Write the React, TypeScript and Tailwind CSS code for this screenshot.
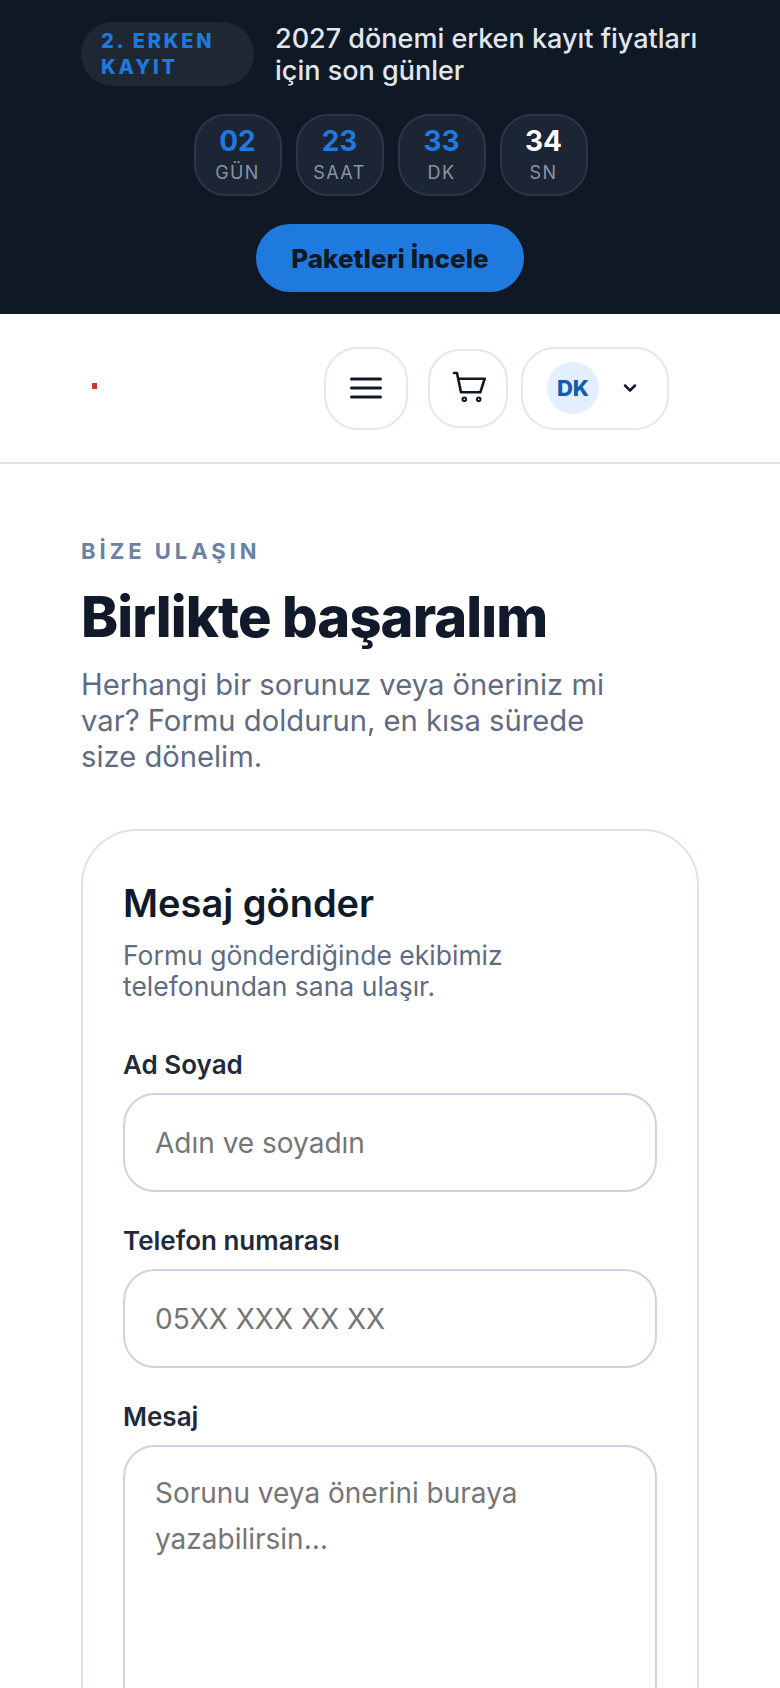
import { ChevronDown } from 'lucide-react';

const counters = [
  { value: '02', label: 'GÜN', color: 'text-[#1f7ae0]' },
  { value: '23', label: 'SAAT', color: 'text-[#1f7ae0]' },
  { value: '33', label: 'DK', color: 'text-[#1f7ae0]' },
  { value: '34', label: 'SN', color: 'text-white' },
];

function CartIcon() {
  return (
    <svg className="ml-[1px]" width="34" height="34" viewBox="-1 -1 34 34" fill="none" stroke="#111827" strokeWidth="2.6" strokeLinecap="round" strokeLinejoin="round">
      <path d="M1 1h3l4 19.300h19.300l4.400-13.600H5.500" />
      <circle cx="11.300" cy="27.300" r="1.800" strokeWidth="2" />
      <circle cx="25.700" cy="27.300" r="1.800" strokeWidth="2" />
    </svg>
  );
}

function Field({ label, placeholder }: { label: string; placeholder: string }) {
  return (
    <div className="flex flex-col gap-[13px]">
      <label className="text-[26px] leading-[30px] font-semibold text-[#1f2a3d]">{label}</label>
      <input
        placeholder={placeholder}
        className="h-[99px] w-full rounded-[32px] border-2 border-[#cbd5e1] bg-white px-[30px] text-[28px] text-[#111827] outline-none placeholder:text-[#757575]"
      />
    </div>
  );
}

export default function App() {
  return (
    <div className="h-[1688px] overflow-hidden bg-white font-['Inter',sans-serif]">
      <div className="flex h-[314px] flex-col items-center bg-[#0f1926] pt-[22px]">
        <div className="flex w-full items-start gap-[21px] pl-[81px]">
          <span className="w-[173px] rounded-[32px] bg-[#1f2733] px-[20px] py-[6px] text-[20px] leading-[26px] font-extrabold tracking-[0.14em] text-[#1f7ae0]">
            2. ERKEN KAYIT
          </span>
          <p className="mt-[1px] w-[440px] text-[27px] leading-[32px] font-medium text-[#e2e6ec]">
            2027 dönemi erken kayıt fiyatları için son günler
          </p>
        </div>
        <div className="mt-[27px] flex gap-[14px] pl-[1px]">
          {counters.map(c => (
            <div key={c.label} className="flex h-[82px] w-[88px] flex-col items-center justify-center rounded-[32px] border-2 border-[#2b3647] bg-[#1b2533] pb-[2px]">
              <span className={`text-[28px] leading-[34px] font-bold ${c.color}`}>{c.value}</span>
              <span className="mt-[3px] text-[18px] leading-[24px] tracking-[0.08em] text-[#8a94a6]">{c.label}</span>
            </div>
          ))}
        </div>
        <button className="mt-[28px] h-[68px] w-[268px] rounded-full bg-[#1f7ae0] text-[26px] font-extrabold text-[#0f1926]">
          Paketleri İncele
        </button>
      </div>

      <div className="flex h-[150px] items-center border-b-2 border-[#dbe3ef] pl-[92px] pr-[111px]">
        <span className="mb-[4px] h-[6px] w-[5px] bg-[#c0392b]" />
        <div className="ml-auto flex items-center">
          <button className="flex h-[83px] w-[84px] items-center justify-center rounded-[34px] border-2 border-[#e2e8f0] bg-white">
            <svg width="32" height="24" viewBox="0 0 32 24" fill="none" stroke="#111827" strokeWidth="3" strokeLinecap="round">
              <path d="M1.500 3h29M1.500 12h29M1.500 21h29" />
            </svg>
          </button>
          <button className="ml-[20px] flex h-[79px] w-[80px] items-center justify-center rounded-[32px] border-2 border-[#e2e8f0] bg-white">
            <CartIcon />
          </button>
          <button className="ml-[13px] flex h-[83px] w-[148px] items-center rounded-[34px] border-2 border-[#e2e8f0] bg-white pl-[24px]">
            <span className="flex h-[52px] w-[52px] items-center justify-center rounded-full bg-[#e3efff] text-[22px] font-extrabold text-[#155bb0]">DK</span>
            <ChevronDown className="ml-[21px] h-[20px] w-[20px] text-[#111827]" strokeWidth={3} />
          </button>
        </div>
      </div>

      <div className="px-[81px] pt-[73px]">
        <p className="text-[22px] leading-[28px] font-bold tracking-[0.18em] text-[#6b82a3]">BİZE ULAŞIN</p>
        <h1 className="mt-[20px] text-[56px] leading-[64px] font-extrabold tracking-[-0.9px] text-[#111a2a]">Birlikte başaralım</h1>
        <p className="mt-[18px] w-[560px] text-[29.200px] leading-[36px] text-[#5f6b80]">
          Herhangi bir sorunuz veya öneriniz mi var? Formu doldurun, en kısa sürede size dönelim.
        </p>

        <div className="mt-[54px] rounded-[56px] border-2 border-[#dbe3ec] bg-white px-[40px] pt-[50px] pb-[40px]">
          <h2 className="text-[38px] leading-[44px] font-semibold text-[#111a2a]">Mesaj gönder</h2>
          <p className="mt-[15px] w-[460px] text-[26.500px] leading-[31px] text-[#5f6b80]">
            Formu gönderdiğinde ekibimiz telefonundan sana ulaşır.
          </p>
          <div className="mt-[48px] flex flex-col gap-[34px]">
            <Field label="Ad Soyad" placeholder="Adın ve soyadın" />
            <Field label="Telefon numarası" placeholder="05XX XXX XX XX" />
            <div className="flex flex-col gap-[13px]">
              <label className="text-[26px] leading-[30px] font-semibold text-[#1f2a3d]">Mesaj</label>
              <textarea
                placeholder="Sorunu veya önerini buraya yazabilirsin…"
                className="h-[400px] w-full resize-none rounded-[32px] border-2 border-[#cbd5e1] bg-white px-[30px] py-[23px] text-[28px] leading-[46px] outline-none placeholder:text-[#757575]"
              />
            </div>
          </div>
        </div>
      </div>
    </div>
  );
}
